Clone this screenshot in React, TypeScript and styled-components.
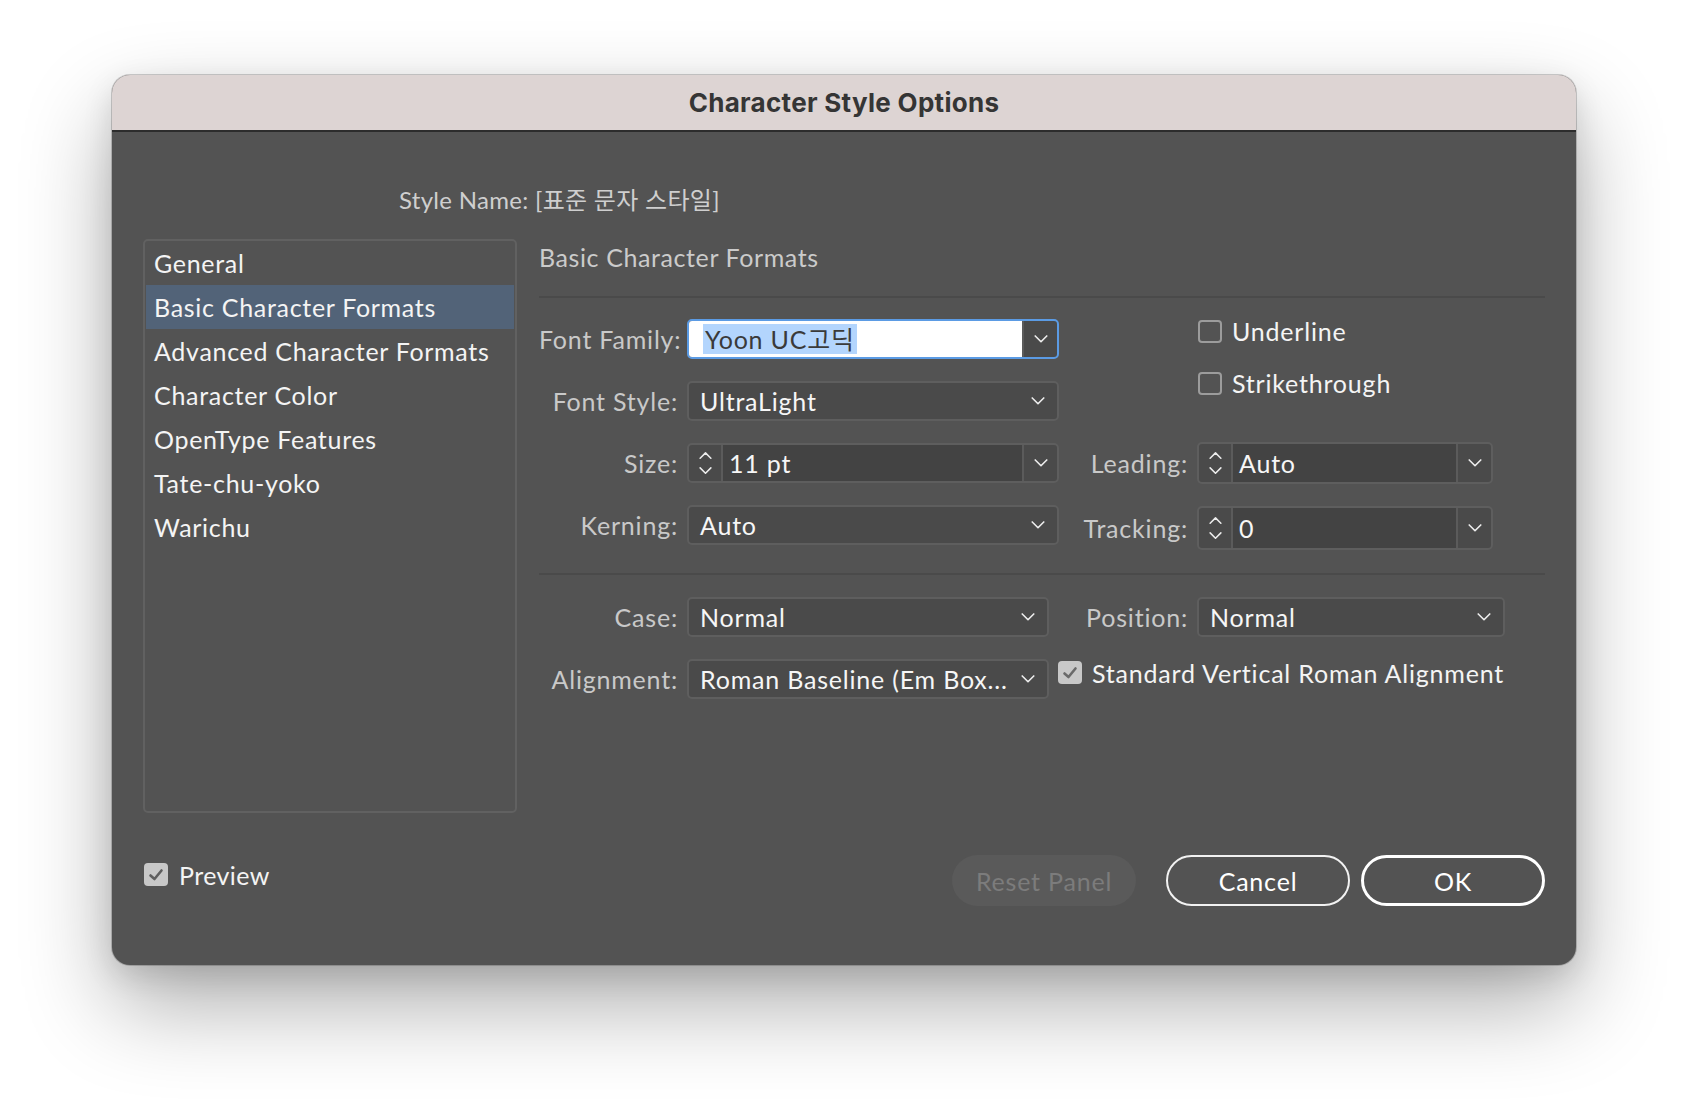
import React from "react"
import styled, { createGlobalStyle } from "styled-components"

const GlobalStyle = createGlobalStyle`
  html, body {
    margin: 0;
    padding: 0;
    background: #ffffff;
  }
  * {
    box-sizing: border-box;
  }
`

const FONT = `"Lato", "Noto Sans CJK KR", sans-serif`

const Page = styled.div`
  width: 1688px;
  height: 1114px;
  padding: 75px 0 0 112px;
  background: #ffffff;
  font-family: ${FONT};
  letter-spacing: 0.8px;
`

const Dialog = styled.div`
  width: 1464px;
  height: 890px;
  border-radius: 18px;
  overflow: hidden;
  background: #535353;
  display: flex;
  flex-direction: column;
  box-shadow: 0 0 0 1px rgba(0, 0, 0, 0.18), 0 40px 90px rgba(0, 0, 0, 0.32),
    0 10px 30px rgba(0, 0, 0, 0.12);
`

const TitleBar = styled.div`
  height: 57px;
  flex: none;
  background: #ddd4d3;
  border-bottom: 2px solid #2c2c2c;
  display: flex;
  align-items: center;
  justify-content: center;
  font-family: "Inter", sans-serif;
  font-weight: 700;
  font-size: 26px;
  color: #353535;
  letter-spacing: 0.3px;
`

const Body = styled.div`
  flex: 1;
  padding: 0 31px;
  display: flex;
  flex-direction: column;
`

const StyleName = styled.div`
  margin-top: 52px;
  padding-left: 256px;
  height: 32px;
  line-height: 32px;
  font-size: 24px;
  letter-spacing: 0.3px;
  color: #cfcfcf;
`

const Main = styled.div`
  margin-top: 23px;
  display: flex;
  align-items: flex-start;
`

const Sidebar = styled.div`
  width: 374px;
  height: 574px;
  flex: none;
  border: 2px solid #616161;
  border-radius: 5px;
  padding: 0 1px;
`

const NavItem = styled.div<{ $active?: boolean }>`
  height: 44px;
  line-height: 44px;
  padding-left: 8px;
  font-size: 25px;
  letter-spacing: 0.7px;
  color: #f4f4f4;
  background: ${(p) => (p.$active ? "#526378" : "transparent")};
  white-space: nowrap;
`

const Panel = styled.div`
  margin-left: 22px;
  flex: 1;
`

const Heading = styled.div`
  height: 36px;
  line-height: 36px;
  font-size: 25px;
  letter-spacing: 0.6px;
  color: #cbcbcb;
`

const Divider = styled.div<{ $top: number; $bottom: number }>`
  height: 2px;
  background: #4a4a4a;
  margin: ${(p) => p.$top}px 0 ${(p) => p.$bottom}px;
`

const Section = styled.div`
  display: flex;
  gap: 16px;
`

const Column = styled.div<{ $w?: number }>`
  width: ${(p) => (p.$w ? `${p.$w}px` : "auto")};
  display: flex;
  flex-direction: column;
  gap: 22px;
`

const Row = styled.div<{ $h?: number }>`
  display: flex;
  align-items: center;
  height: ${(p) => p.$h || 40}px;
`

const Label = styled.div<{ $w: number }>`
  width: ${(p) => p.$w}px;
  flex: none;
  padding-right: 9px;
  text-align: right;
  font-size: 25px;
  color: #c9c9c9;
  white-space: nowrap;
`

const Box = styled.div<{ $w: number; $h?: number; $focus?: boolean }>`
  width: ${(p) => p.$w}px;
  height: ${(p) => p.$h || 40}px;
  flex: none;
  display: flex;
  align-items: stretch;
  border: 2px solid ${(p) => (p.$focus ? "#5b9be4" : "#5e5e5e")};
  border-radius: 5px;
  background: #4a4a4a;
  overflow: hidden;
`

const Value = styled.div<{ $dark?: boolean }>`
  flex: 1;
  display: flex;
  align-items: center;
  padding-left: ${(p) => (p.$dark ? 6 : 11)}px;
  font-size: 25px;
  color: #f6f6f6;
  background: ${(p) => (p.$dark ? "#434343" : "transparent")};
  white-space: nowrap;
  overflow: hidden;
`

const EditField = styled.div`
  flex: 1;
  display: flex;
  align-items: center;
  padding-left: 14px;
  background: #ffffff;
`

const Selected = styled.span`
  background: #b3d5fd;
  color: #3a3a3a;
  font-size: 25px;
  line-height: 30px;
  padding: 0 2px;
`

const Stepper = styled.div`
  width: 34px;
  flex: none;
  display: flex;
  flex-direction: column;
  align-items: center;
  justify-content: center;
  gap: 8px;
  border-right: 2px solid #5b5b5b;
`

const DropSeg = styled.div<{ $line?: boolean }>`
  width: ${(p) => (p.$line ? 35 : 38)}px;
  flex: none;
  display: flex;
  align-items: center;
  justify-content: center;
  border-left: ${(p) => (p.$line ? "2px solid #5b5b5b" : "none")};
`

const CheckRow = styled.div<{ $h?: number }>`
  display: flex;
  align-items: center;
  height: ${(p) => p.$h || 40}px;
  gap: 10px;
  font-size: 25px;
  color: #f4f4f4;
  white-space: nowrap;
`

const AlignCheck = styled(CheckRow)`
  margin-left: 9px;
  margin-bottom: 13px;
`

const Check = styled.div<{ $on?: boolean }>`
  width: 24px;
  height: 23px;
  flex: none;
  border-radius: 4px;
  border: ${(p) => (p.$on ? "none" : "2px solid #9c9c9c")};
  background: ${(p) => (p.$on ? "#c8c8c8" : "transparent")};
  display: flex;
  align-items: center;
  justify-content: center;
`

const CheckStack = styled.div`
  height: 102px;
  padding-left: 123px;
  display: flex;
  flex-direction: column;
  gap: 26px;
  margin-top: -1px;
`

const Footer = styled.div`
  margin-top: 42px;
  display: flex;
  align-items: center;
  height: 51px;
`

const Preview = styled(CheckRow)`
  margin-bottom: 12px;
  gap: 11px;
  margin-left: 1px;
  letter-spacing: 0.4px;
`

const Buttons = styled.div`
  margin-left: auto;
  display: flex;
  align-items: center;
`

const Button = styled.div<{ $kind: "ghost" | "normal" | "primary" }>`
  width: 184px;
  height: 51px;
  border-radius: 26px;
  display: flex;
  align-items: center;
  justify-content: center;
  font-size: 25px;
  margin-left: ${(p) => (p.$kind === "ghost" ? 0 : p.$kind === "normal" ? 30 : 11)}px;
  color: ${(p) => (p.$kind === "ghost" ? "#7c7c7c" : "#ffffff")};
  background: ${(p) => (p.$kind === "ghost" ? "#5a5a5a" : "transparent")};
  border: ${(p) =>
    p.$kind === "ghost" ? "none" : p.$kind === "normal" ? "2px solid #f2f2f2" : "3px solid #ffffff"};
`

const Chevron = ({ up, size = 14 }: { up?: boolean; size?: number }) => (
  <svg width={size} height={size * 0.55} viewBox="0 0 14 8" style={{ display: "block" }}>
    <path
      d={up ? "M1 7 L7 1 L13 7" : "M1 1 L7 7 L13 1"}
      fill="none"
      stroke="#ececec"
      strokeWidth="1.7"
      strokeLinecap="round"
      strokeLinejoin="round"
    />
  </svg>
)

const Tick = ({ color }: { color: string }) => (
  <svg width="16" height="14" viewBox="0 0 16 14">
    <path
      d="M2.5 7.5 L6.5 11 L13.5 2.5"
      fill="none"
      stroke={color}
      strokeWidth="2.6"
      strokeLinecap="round"
      strokeLinejoin="round"
    />
  </svg>
)

const SelectBox = ({ w, value, h }: { w: number; value: string; h?: number }) => (
  <Box $w={w} $h={h}>
    <Value>{value}</Value>
    <DropSeg>
      <Chevron />
    </DropSeg>
  </Box>
)

const SpinBox = ({ w, value, h }: { w: number; value: string; h?: number }) => (
  <Box $w={w} $h={h}>
    <Stepper>
      <Chevron up size={13} />
      <Chevron size={13} />
    </Stepper>
    <Value $dark>{value}</Value>
    <DropSeg $line>
      <Chevron />
    </DropSeg>
  </Box>
)

const navItems = [
  "General",
  "Basic Character Formats",
  "Advanced Character Formats",
  "Character Color",
  "OpenType Features",
  "Tate-chu-yoko",
  "Warichu",
]

const App = () => {
  return (
    <Page>
      <GlobalStyle />
      <Dialog>
        <TitleBar>Character Style Options</TitleBar>
        <Body>
          <StyleName>Style Name: [표준 문자 스타일]</StyleName>
          <Main>
            <Sidebar>
              {navItems.map((item) => (
                <NavItem key={item} $active={item === "Basic Character Formats"}>
                  {item}
                </NavItem>
              ))}
            </Sidebar>
            <Panel>
              <Heading>Basic Character Formats</Heading>
              <Divider $top={21} $bottom={21} />
              <Section>
                <Column $w={520}>
                  <Row>
                    <Label $w={148}>Font Family:</Label>
                    <Box $w={372} $focus>
                      <EditField>
                        <Selected>Yoon UC고딕</Selected>
                      </EditField>
                      <DropSeg $line>
                        <Chevron />
                      </DropSeg>
                    </Box>
                  </Row>
                  <Row>
                    <Label $w={148}>Font Style:</Label>
                    <SelectBox w={372} value="UltraLight" />
                  </Row>
                  <Row>
                    <Label $w={148}>Size:</Label>
                    <SpinBox w={372} value="11 pt" />
                  </Row>
                  <Row>
                    <Label $w={148}>Kerning:</Label>
                    <SelectBox w={372} value="Auto" />
                  </Row>
                </Column>
                <Column>
                  <CheckStack>
                    <CheckRow $h={26}>
                      <Check />
                      Underline
                    </CheckRow>
                    <CheckRow $h={26}>
                      <Check />
                      Strikethrough
                    </CheckRow>
                  </CheckStack>
                  <Row $h={42}>
                    <Label $w={122}>Leading:</Label>
                    <SpinBox w={296} h={42} value="Auto" />
                  </Row>
                  <Row $h={44}>
                    <Label $w={122}>Tracking:</Label>
                    <SpinBox w={296} h={44} value="0" />
                  </Row>
                </Column>
              </Section>
              <Divider $top={23} $bottom={22} />
              <Column>
                <Row>
                  <Label $w={148}>Case:</Label>
                  <SelectBox w={362} value="Normal" />
                  <Label $w={148}>Position:</Label>
                  <SelectBox w={308} value="Normal" />
                </Row>
                <Row>
                  <Label $w={148}>Alignment:</Label>
                  <SelectBox w={362} value="Roman Baseline (Em Box..." />
                  <AlignCheck>
                    <Check $on>
                      <Tick color="#6a6a6a" />
                    </Check>
                    Standard Vertical Roman Alignment
                  </AlignCheck>
                </Row>
              </Column>
            </Panel>
          </Main>
          <Footer>
            <Preview>
              <Check $on>
                <Tick color="#5e5e5e" />
              </Check>
              Preview
            </Preview>
            <Buttons>
              <Button $kind="ghost">Reset Panel</Button>
              <Button $kind="normal">Cancel</Button>
              <Button $kind="primary">OK</Button>
            </Buttons>
          </Footer>
        </Body>
      </Dialog>
    </Page>
  )
}

export default App
